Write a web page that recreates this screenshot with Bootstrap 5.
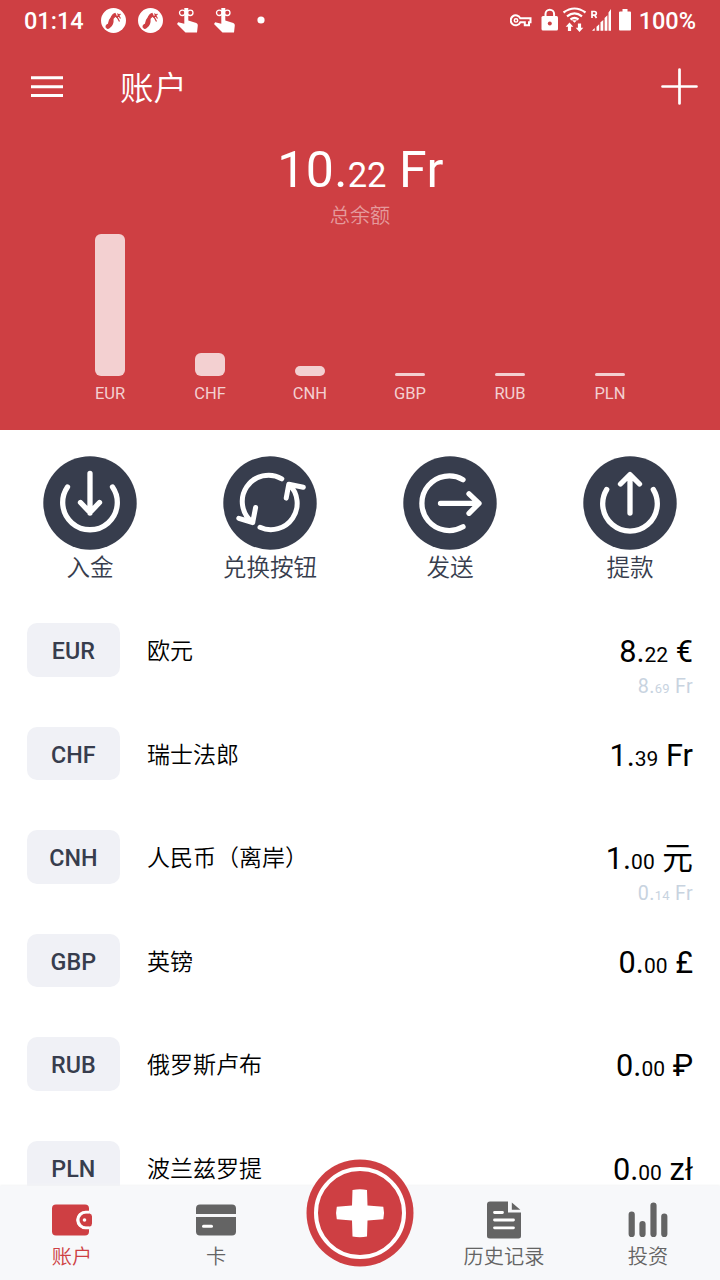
<!DOCTYPE html>
<html lang="zh-CN">
<head>
<meta charset="utf-8">
<meta name="viewport" content="width=device-width, initial-scale=1">
<title>账户</title>
<link href="https://cdn.jsdelivr.net/npm/bootstrap@5.3.0/dist/css/bootstrap.min.css" rel="stylesheet">
<style>
  :root { --brand: #ce3f43; --ink: #373d4d; }
  body { font-family: Roboto, "Noto Sans CJK SC", sans-serif; color: #000; background: #fff; }
  svg { display: block; flex: none; }
  .screen { height: 1280px; }
  .hero { background: var(--brand); color: #fff; height: 429.5px; }
  .statusbar { height: 40px; padding: 0 24px; font-size: 23.5px; font-weight: 500; line-height: 42px; }
  .statusbar span { padding-top: 1px; }
  .titlebar { height: 93px; padding: 0 22px 0 31px; }
  .page-title { font-size: 33.5px; line-height: 93px; margin-left: 57px; padding-top: 3px; font-weight: 350; }
  .total { height: 65px; font-size: 50px; line-height: 75px; letter-spacing: .3px; padding-left: 1px; }
  .total small { font-size: 34.5px; letter-spacing: 0; }
  .total-label { font-size: 20.2px; line-height: 37px; height: 36px; color: #e59a9c; font-weight: 350; }
  .chart { height: 142px; padding: 0 60px; }
  .bar { width: 30px; background: #f3d0d1; border-radius: 6px; }
  .labels { padding: 0 60px; font-size: 16.5px; line-height: 36px; color: #f3d0d1; }
  .actions { padding-top: 26.5px; color: var(--ink); font-size: 23.6px; font-weight: 350; line-height: 36px; }
  .list-area { padding: 37.3px 27px 0 26.7px; min-height: 0; }
  .money-row { height: 103.5px; }
  .code { width: 93.3px; height: 53.3px; line-height: 56.5px; border-radius: 10px; background: #f0f1f6; color: var(--ink); font-size: 23.3px; font-weight: 500; }
  .title { font-size: 23px; font-weight: 350; line-height: 57px; margin-left: 27px; }
  .amount { font-size: 30.7px; line-height: 58px; }
  .amount small { font-size: 21px; }
  .sub { font-size: 19.7px; line-height: 20px; margin-top: -7.5px; letter-spacing: .3px; color: #c8d3df; }
  .sub small { font-size: 13px; }
  .tabs { height: 94.5px; background: #f7f8fa; box-shadow: 0 -1px 2px #f3f4f5; font-size: 20.2px; line-height: 35px; color: #646464; padding-top: 14.5px; }
  .tabs .tab { width: 144px; font-weight: 350; }
  .tabs .on { color: var(--brand); }
  .fab { top: -27px; left: 306px; }
</style>
</head>
<body>
<svg width="0" height="0" class="position-absolute">
  <defs>
    <symbol id="fan" viewBox="0 0 25 25"><circle cx="12.5" cy="12.5" r="12.5" fill="#fff"/><path d="M8.500 19.500Q6.500 21 5.300 19.500Q4.500 17 7.500 16Q8 12 10 10Q11.500 6 14 5.500L15 7.500L12 10.500Q12.500 17 8.500 19.500ZM14 6.500Q16.500 9 18.500 13.500M15 9.500L19.500 6M16.500 5.500L19.500 10.500" fill="#ce3f43" stroke="#ce3f43" stroke-width="1.200"/></symbol>
    <symbol id="touch" viewBox="0 0 21 26"><path d="M7.300 1h4v12.500l8 2.500q1.700.5 1.500 2.500L20 25.500H8.500L0 17l1.200-1.700 6.100 1.400z" fill="#fff"/><ellipse cx="5.300" cy="5.800" rx="2.800" ry="2.700" fill="none" stroke="#fff" stroke-width="1.300"/><ellipse cx="13.200" cy="5.800" rx="2.800" ry="2.700" fill="none" stroke="#fff" stroke-width="1.300"/></symbol>
  </defs>
</svg>
<main class="screen d-flex flex-column overflow-hidden">
  <header class="hero flex-shrink-0">
    <div class="statusbar d-flex align-items-center">
      <span>01:14</span>
      <svg width="25" height="25" style="margin-left:17px"><use href="#fan"/></svg>
      <svg width="25" height="25" style="margin-left:12px"><use href="#fan"/></svg>
      <svg width="21" height="26" style="margin-left:14px"><use href="#touch"/></svg>
      <svg width="21" height="26" style="margin-left:16px"><use href="#touch"/></svg>
      <svg width="8" height="8" style="margin-left:22px"><circle cx="4" cy="4" r="3.600" fill="#fff"/></svg>
      <svg class="ms-auto" width="121" height="26" viewBox="510 7 121 26" fill="none" stroke="#fff">
        <path d="M520.300 18.300H530.500v4h-1.500v3h-4.200v-3h-4.500a5 5 0 1 1 0-4z" stroke-width="2"/><circle cx="516" cy="20.400" r="1.700" stroke-width="1.500"/>
        <rect x="541.500" y="16" width="16.500" height="14.500" rx="1.500" fill="#fff" stroke="none"/><path d="M545.500 17v-3a4.300 4.300 0 0 1 8.600 0v3" stroke-width="2"/><circle cx="549.800" cy="23.500" r="2" fill="#ce3f43" stroke="none"/>
        <path d="M563.500 12.500Q574.500 4.500 585.500 12.500M567 16.300Q574.500 10.500 582 16.300M570.500 19.500Q574.500 16.500 578.500 19.500" stroke-width="2.200"/><path d="M572 20.200h5l-2.500 2.500z" fill="#fff" stroke="none"/>
        <path d="M569.500 22.500l3.800 4.200h-2.200v4.300h-3.200v-4.300h-2.200zM579.500 32l-3.800-4.200h2.200v-4.300h3.200v4.300h2.200z" fill="#fff" stroke="none"/>
        <path d="M592 18v-6.500h2.500a1.800 1.800 0 0 1 0 3.600H592M594.500 15l2 3" stroke-width="1.700"/>
        <path d="M592 30.800h2.700V28zM596.500 30.800h2.700v-6.500l-2.700 2.500zM600.500 30.800h2.800V20L600.500 22.300zM604.600 30.800h2.800V15.300L604.600 18zM608.500 30.800h2.500V9l-2.500 3.500z" fill="#fff" stroke="none"/>
        <path d="M620 11.500h2.500V9h5v2.500h2.500q1 0 1 1v17q0 1-1 1h-10q-1 0-1-1v-17q0-1 1-1z" fill="#fff" stroke="none"/>
      </svg>
      <span style="margin-left:8px">100%</span>
    </div>
    <div class="titlebar d-flex align-items-center">
      <svg width="32" height="22" fill="#fff"><path d="M0 .300h32v3H0zM0 9.300h32v3H0zM0 18h32v3H0z"/></svg>
      <h1 class="page-title mb-0">账户</h1>
      <svg class="ms-auto" width="37" height="37" stroke="#fff" stroke-width="2.700" stroke-linecap="round"><path d="M18.500 1.500v34M1.500 18.500h34"/></svg>
    </div>
    <div class="total text-center">10.<small>22</small> Fr</div>
    <div class="total-label text-center">总余额</div>
    <div class="chart d-flex align-items-end">
      <div class="col d-flex justify-content-center"><div class="bar" style="height:142px"></div></div>
      <div class="col d-flex justify-content-center"><div class="bar" style="height:22.700px"></div></div>
      <div class="col d-flex justify-content-center"><div class="bar" style="height:10px"></div></div>
      <div class="col d-flex justify-content-center"><div class="bar" style="height:3px"></div></div>
      <div class="col d-flex justify-content-center"><div class="bar" style="height:3px"></div></div>
      <div class="col d-flex justify-content-center"><div class="bar" style="height:3px"></div></div>
    </div>
    <div class="labels d-flex text-center">
      <span class="col">EUR</span><span class="col">CHF</span><span class="col">CNH</span><span class="col">GBP</span><span class="col">RUB</span><span class="col">PLN</span>
    </div>
  </header>

  <section class="actions d-flex text-center flex-shrink-0">
    <div class="col"><svg class="mx-auto" width="94" height="94" fill="none" stroke="#fff" stroke-width="5.300" stroke-linecap="round" stroke-linejoin="round"><circle cx="47" cy="47" r="46.700" fill="#373d4d" stroke="none"/><path d="M24.500 31A27.300 27.300 0 1 0 69.500 31M47 17.500V57M37.500 46.500L47 56.500 56.500 46.500"/></svg>入金</div>
    <div class="col"><svg class="mx-auto" width="94" height="94" fill="none" stroke="#fff" stroke-width="5" stroke-linecap="round" stroke-linejoin="round"><circle cx="47" cy="47" r="46.700" fill="#373d4d" stroke="none"/><path d="M58.800 22.800A26.300 26.300 0 0 0 29.700 66.500M15.800 62.300l13.900 4.200L32.600 51.500M37 71.300A26.300 26.300 0 0 0 66 28.300M80.300 31.300L65.800 28.300 63.200 42.100"/></svg>兑换按钮</div>
    <div class="col"><svg class="mx-auto" width="94" height="94" fill="none" stroke="#fff" stroke-width="5.300" stroke-linecap="round" stroke-linejoin="round"><circle cx="47" cy="47" r="46.700" fill="#373d4d" stroke="none"/><path d="M60 23.700A27.300 27.300 0 1 0 60 70.800M37.500 47.300H76M66 37.800L76 47.300 66 57.300"/></svg>发送</div>
    <div class="col"><svg class="mx-auto" width="94" height="94" fill="none" stroke="#fff" stroke-width="5.300" stroke-linecap="round" stroke-linejoin="round"><circle cx="47" cy="47" r="46.700" fill="#373d4d" stroke="none"/><path d="M23.700 33.500A27.300 27.300 0 1 0 70.300 33.500M47 57V19M37.500 28L47 18.500 56.500 28"/></svg>提款</div>
  </section>

  <section class="list-area flex-grow-1 overflow-hidden">
    <div class="money-row d-flex"><div class="code text-center">EUR</div><div class="title">欧元</div><div class="ms-auto text-end"><div class="amount">8.<small>22</small> €</div><div class="sub">8.<small>69</small> Fr</div></div></div>
    <div class="money-row d-flex"><div class="code text-center">CHF</div><div class="title">瑞士法郎</div><div class="ms-auto text-end"><div class="amount">1.<small>39</small> Fr</div></div></div>
    <div class="money-row d-flex"><div class="code text-center">CNH</div><div class="title">人民币（离岸）</div><div class="ms-auto text-end"><div class="amount">1.<small>00</small> 元</div><div class="sub">0.<small>14</small> Fr</div></div></div>
    <div class="money-row d-flex"><div class="code text-center">GBP</div><div class="title">英镑</div><div class="ms-auto text-end"><div class="amount">0.<small>00</small> £</div></div></div>
    <div class="money-row d-flex"><div class="code text-center">RUB</div><div class="title">俄罗斯卢布</div><div class="ms-auto text-end"><div class="amount">0.<small>00</small> ₽</div></div></div>
    <div class="money-row d-flex"><div class="code text-center">PLN</div><div class="title">波兰兹罗提</div><div class="ms-auto text-end"><div class="amount">0.<small>00</small> zł</div></div></div>
  </section>

  <nav class="tabs d-flex text-center position-relative flex-shrink-0">
    <div class="tab on"><svg class="mx-auto" width="40" height="40" viewBox="0 0 40 40"><path fill="#ce3f43" d="M4 4.500h29q4 0 4 4V11h-3.500a9 9 0 0 0 0 18H37v2.500q0 4-4 4H4q-4 0-4-4v-23q0-4 4-4z"/><path fill="#ce3f43" d="M34 13.500h3.500q2.500.5 2.500 3v7q0 2.500-2.500 3H34a6.500 6.500 0 0 1 0-13z"/><circle cx="32.500" cy="20" r="1.800" fill="#fff"/><path d="M37 12h-3.500a8 8 0 0 0 0 16H37" fill="none" stroke="#fff" stroke-width="2.500"/></svg>账户</div>
    <div class="tab"><svg class="mx-auto" width="40" height="40" fill="#646464"><path d="M4 4.500h32q4 0 4 4V14H0V8.500q0-4 4-4zM0 17h40v14.500q0 4-4 4H4q-4 0-4-4z"/><path d="M7.500 26.200h8" stroke="#fff" stroke-width="3" stroke-linecap="round"/></svg>卡</div>
    <div class="tab"></div>
    <div class="tab"><svg class="mx-auto" width="40" height="40" fill="#646464"><path d="M6 1.500h18v11h13V36q0 2.500-2.500 2.500H6Q3 38.500 3 36V4.500q0-3 3-3z"/><path d="M27.800 2.500l8.500 7.300h-8.500z"/><path d="M10.500 12.500h8M10.500 20h19M10.500 27.800h19" stroke="#fff" stroke-width="2.800" stroke-linecap="round"/></svg>历史记录</div>
    <div class="tab"><svg class="mx-auto" width="40" height="40" stroke="#646464" stroke-width="6.200" stroke-linecap="round"><path d="M3.700 14.500v19.500M14.500 24v10M25.500 5.500V34M36.300 16.500V34"/></svg>投资</div>
    <svg class="fab position-absolute" width="108" height="108" viewBox="0 0 108 108"><circle cx="54" cy="54" r="53.500" fill="#ce3f43"/><circle cx="54" cy="54" r="44" fill="none" stroke="#fff" stroke-width="4"/><path fill="#fff" d="M46.500 31q7.500-1.500 14.500 0l.5 15.500 15.800 1.300q1.500 6.200 0 12.500L61.500 61.500 61 77.500q-7 1.500-14.500 0L46 61.500 30.800 60.300q-1.500-6.200 0-12.500L46 46.500z"/></svg>
  </nav>
</main>
<script src="https://cdn.jsdelivr.net/npm/bootstrap@5.3.0/dist/js/bootstrap.bundle.min.js"></script>
</body>
</html>
